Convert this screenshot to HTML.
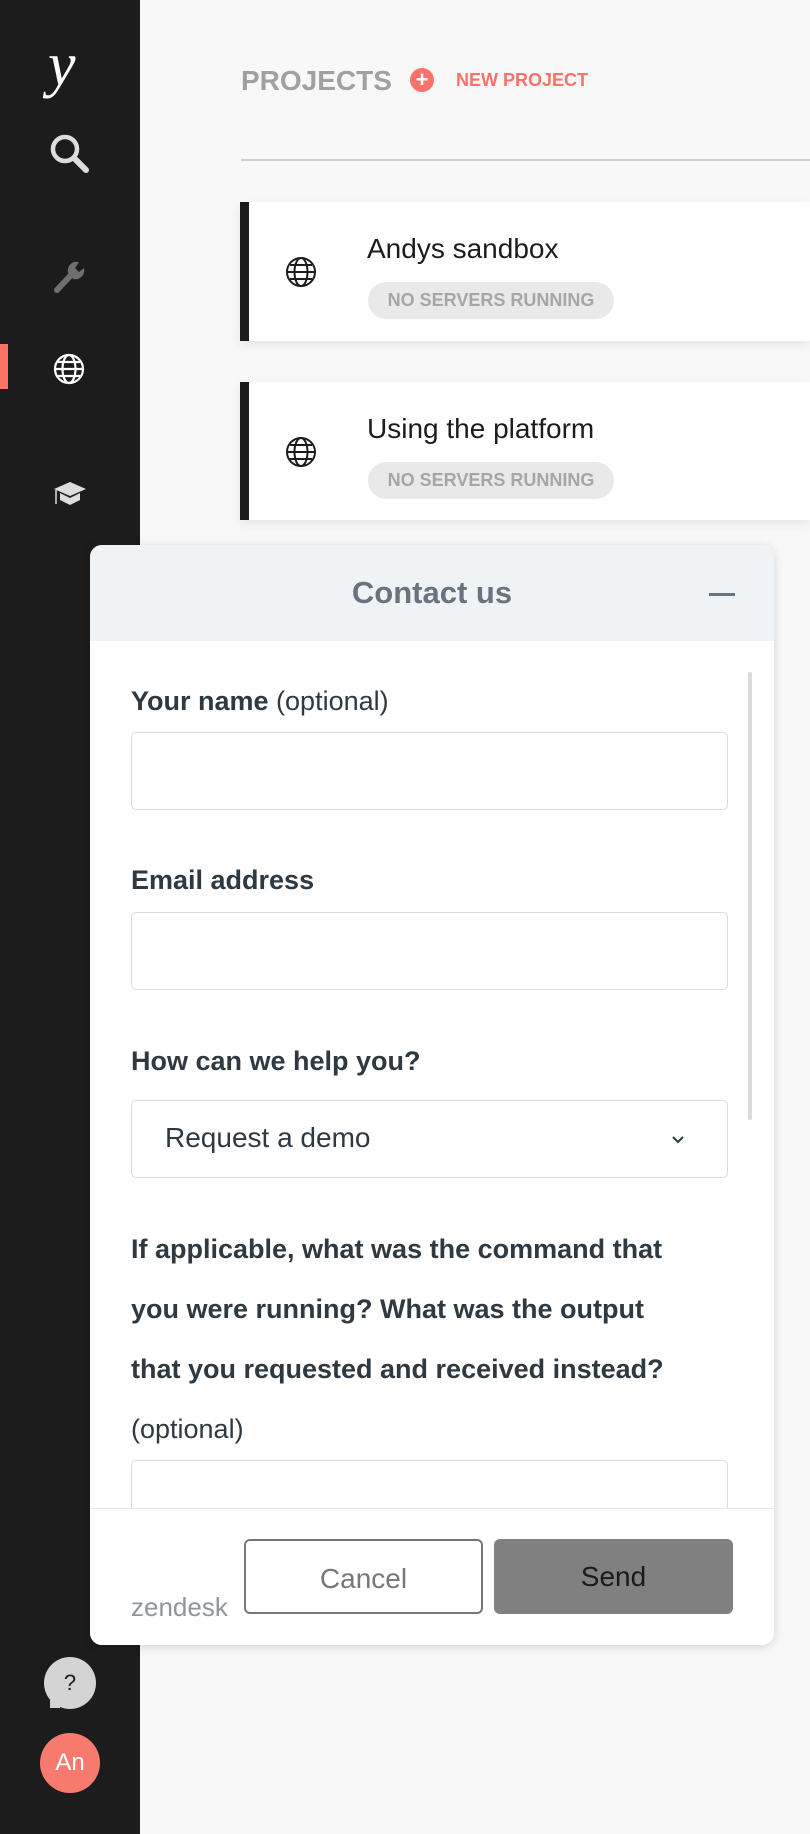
<!DOCTYPE html>
<html><head><meta charset="utf-8"><style>
*{box-sizing:border-box;margin:0;padding:0}
body{width:810px;height:1834px;background:#f8f8f8;font-family:"Liberation Sans",sans-serif;position:relative;overflow:hidden}
.side{position:absolute;left:0;top:0;width:140px;height:1834px;background:#1c1c1c}
.abs{position:absolute}
.card{position:absolute;left:240px;width:570px;background:#fff;border-left:9px solid #1c1c1c;box-shadow:0 4px 10px rgba(0,0,0,.08)}
.card .t{position:absolute;left:118px;top:31px;font-size:28px;color:#1c1c1c}
.card .b{position:absolute;left:119px;top:80px;width:246px;height:37px;border-radius:19px;background:#e9e9e9;color:#a6a6a6;font-size:18px;font-weight:bold;line-height:37px;text-align:center}
.card svg{position:absolute;left:36px;top:54px}
.modal{position:absolute;left:90px;top:545px;width:684px;height:1100px;background:#fff;border-radius:12px;box-shadow:0 2px 10px rgba(0,0,0,.15);overflow:hidden}
.hd{height:96px;background:#f0f3f6;text-align:center;font-size:31px;font-weight:bold;color:#68737d;line-height:96px}
.lbl{position:absolute;left:41px;font-size:27px;font-weight:bold;color:#2f3941;white-space:nowrap}
.lbl span{font-weight:normal}
.inp{position:absolute;left:41px;width:597px;height:78px;border:1.5px solid #d8dcde;border-radius:5px;background:#fff}
.ft{position:absolute;left:0;top:963px;width:684px;height:137px;background:#fff;border-top:1.5px solid #e6e9eb}
.btn{position:absolute;top:30px;width:239px;height:75px;border-radius:6px;text-align:center;line-height:75px;font-size:28px}
</style></head><body>
<div class="side"></div>
<div class="abs" style="left:48px;top:30px;font-family:'Liberation Serif',serif;font-style:italic;font-size:62px;color:#fff">y</div>
<svg class="abs" style="left:48px;top:132px" width="44" height="44" viewBox="0 0 44 44"><circle cx="17" cy="17" r="12" fill="none" stroke="#ddd" stroke-width="4.5"/><path d="M26 26 L38 38" stroke="#ddd" stroke-width="6" stroke-linecap="round"/></svg>
<svg class="abs" style="left:52px;top:260px" width="34" height="34" viewBox="0 0 34 34"><path d="M5 30 L19 15" stroke="#6f6f6f" stroke-width="6" stroke-linecap="round"/><path d="M16 13 A9 9 0 0 1 27 2 L23 8 L27 12 L32 8 A9 9 0 0 1 21 19Z" fill="#6f6f6f"/></svg>
<div class="abs" style="left:0;top:344px;width:8px;height:45px;background:#fa7268"></div>
<svg class="abs" style="left:53px;top:353px" width="32" height="32" viewBox="0 0 32 32" fill="none" stroke="#fff" stroke-width="2.2"><circle cx="16" cy="16" r="14"/><ellipse cx="16" cy="16" rx="6.5" ry="14"/><path d="M2 16H30M5 9H27M5 23H27"/></svg>
<svg class="abs" style="left:53px;top:480px" width="34" height="30" viewBox="0 0 34 30"><path d="M1 9 L17 2 L33 9 L17 16Z" fill="#ddd"/><path d="M7 13 V20 L17 25 L27 20 V13 L17 18Z" fill="#ddd"/><path d="M3 10 V24" stroke="#ddd" stroke-width="1.5"/></svg>

<div class="abs" style="left:241px;top:65px;font-size:28px;font-weight:bold;color:#a0a0a0">PROJECTS</div>
<div class="abs" style="left:410px;top:68px;width:24px;height:24px;border-radius:50%;background:#fa7268;color:#fff;font-weight:bold;font-size:22px;line-height:24px;text-align:center">+</div>
<div class="abs" style="left:456px;top:70px;font-size:18px;font-weight:bold;color:#fa7268">NEW PROJECT</div>
<div class="abs" style="left:241px;top:159px;width:569px;height:2px;background:#d0d0d0"></div>

<div class="card" style="top:202px;height:139px"><svg width="32" height="32" viewBox="0 0 32 32" fill="none" stroke="#1c1c1c" stroke-width="2"><circle cx="16" cy="16" r="14"/><ellipse cx="16" cy="16" rx="6.5" ry="14"/><path d="M2 16H30M5 9H27M5 23H27"/></svg><div class="t">Andys sandbox</div><div class="b">NO SERVERS RUNNING</div></div>
<div class="card" style="top:382px;height:138px"><svg width="32" height="32" viewBox="0 0 32 32" fill="none" stroke="#1c1c1c" stroke-width="2"><circle cx="16" cy="16" r="14"/><ellipse cx="16" cy="16" rx="6.5" ry="14"/><path d="M2 16H30M5 9H27M5 23H27"/></svg><div class="t">Using the platform</div><div class="b">NO SERVERS RUNNING</div></div>

<div class="modal">
<div class="hd">Contact us</div>
<div class="abs" style="left:619px;top:48px;width:26px;height:3px;background:#68737d"></div>
<div class="abs" style="left:658px;top:127px;width:4px;height:448px;background:#d8dcde;border-radius:2px"></div>
<div class="lbl" style="top:141px">Your name <span>(optional)</span></div>
<div class="inp" style="top:187px"></div>
<div class="lbl" style="top:320px">Email address</div>
<div class="inp" style="top:367px"></div>
<div class="lbl" style="top:501px">How can we help you?</div>
<div class="inp" style="top:555px"><span style="position:absolute;left:33px;top:21px;font-size:28px;color:#2f3941">Request a demo</span><svg style="position:absolute;left:538px;top:33px" width="16" height="12" viewBox="0 0 16 12"><path d="M3 3 L8 8 L13 3" fill="none" stroke="#2f3941" stroke-width="2"/></svg></div>
<div class="lbl" style="top:674px;line-height:60px">If applicable, what was the command that<br>you were running? What was the output<br>that you requested and received instead?<br><span>(optional)</span></div>
<div class="inp" style="top:915px;height:120px"></div>
<div class="ft">
<div class="abs" style="left:41px;top:83px;font-size:26px;color:#8c969f">zendesk</div>
<div class="btn" style="left:154px;border:2px solid #777;color:#777">Cancel</div>
<div class="btn" style="left:404px;background:#808080;color:#1a1a1a">Send</div>
</div>
</div>

<div class="abs" style="left:44px;top:1657px;width:52px;height:52px;border-radius:50%;background:#d4d4d4;text-align:center;line-height:52px;font-size:22px;color:#1c1c1c">?</div>
<div class="abs" style="left:50px;top:1700px;width:10px;height:8px;background:#d4d4d4"></div>
<div class="abs" style="left:40px;top:1733px;width:60px;height:60px;border-radius:50%;background:#f87a6e;text-align:center;line-height:60px;font-size:24px;color:#fff">An</div>
</body></html>
